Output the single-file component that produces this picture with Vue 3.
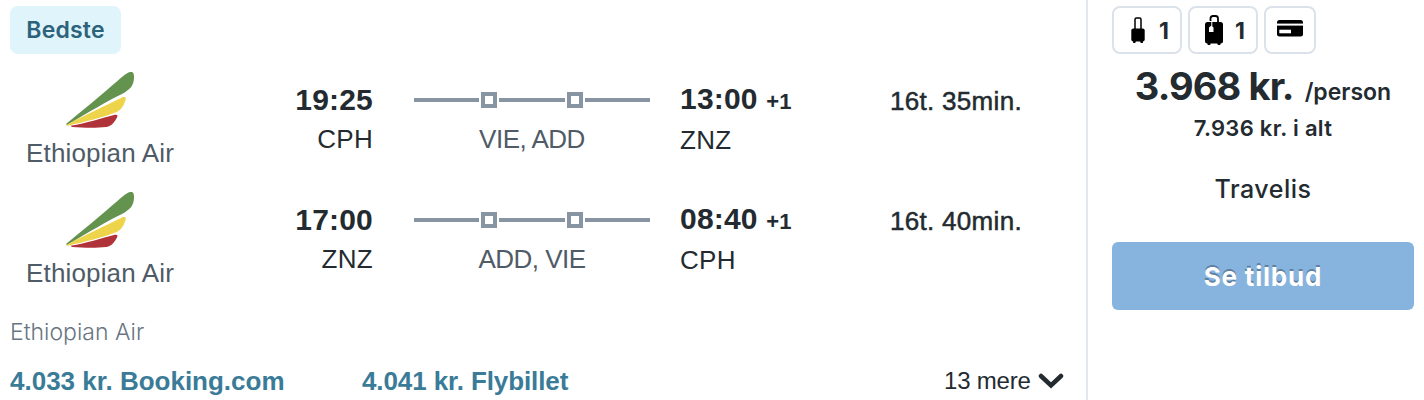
<template>
  <div class="result">
    <main class="details">
      <span class="badge">Bedste</span>
      <ul class="legs">
        <li class="leg" v-for="leg in legs" :key="leg.from">
          <div class="airline">
            <svg class="airline__logo" width="70" height="58" viewBox="0 0 70 58" fill="none" xmlns="http://www.w3.org/2000/svg">
              <path d="M1 52C18 38 35 24 50 11C56 6 61 1 65 0C68 -0.500 69 1 69 5C69 13 66 17 57 22C44 28 24 40 2 53Z" fill="#64924f"/>
              <path d="M1.500 53C22 42 40 34 55 26.500C60 24 61.500 25 60.500 28C58 36 55 39 49 41C39 45 19 50 4 53.500C2 54 1 53.800 1.500 53Z" fill="#edd44b"/>
              <path d="M5.500 53.800C22 51 36 46.500 48 43.300C52 42.300 53.500 43 52 45.500C49 51 46 54.500 41 55C31 56.200 18 55.700 7 55Z" fill="#b1333a"/>
            </svg>
            <span class="airline__name">Ethiopian Air</span>
          </div>
          <div class="depart">
            <span class="time">{{ leg.departure }}</span>
            <span class="airport">{{ leg.from }}</span>
          </div>
          <div class="stops">
            <div class="stops__line">
              <i class="dash"></i>
              <i class="stop"></i>
              <i class="dash"></i>
              <i class="stop"></i>
              <i class="dash"></i>
            </div>
            <span class="stops__names">{{ leg.stops }}</span>
          </div>
          <div class="arrive">
            <span class="time">{{ leg.arrival }} <small class="next-day">+1</small></span>
            <span class="airport">{{ leg.to }}</span>
          </div>
          <span class="duration">{{ leg.duration }}</span>
        </li>
      </ul>
      <p class="operator">Ethiopian Air</p>
      <div class="offers">
        <a class="offer offer_first">4.033 kr. Booking.com</a>
        <a class="offer offer_second">4.041 kr. Flybillet</a>
        <span class="more">13 mere</span>
        <svg class="chevron" width="26" height="16" viewBox="0 0 26 16" fill="none" xmlns="http://www.w3.org/2000/svg">
          <path d="M3 3L13 12.5L23 3" stroke="#232b30" stroke-width="4.5" stroke-linecap="round" stroke-linejoin="miter"/>
        </svg>
      </div>
    </main>
    <aside class="price">
      <div class="perks">
        <span class="perk perk_bag">
          <svg width="14" height="26" viewBox="0 0 14 26" fill="none" xmlns="http://www.w3.org/2000/svg">
            <path d="M4 12V2.5Q4 1 5.5 1H8.5Q10 1 10 2.5V12" stroke="#000" stroke-width="1.5"/>
            <rect x="0.3" y="11.5" width="13.4" height="13" rx="2" fill="#000"/>
            <rect x="2" y="23.5" width="2.6" height="2.5" rx="0.8" fill="#000"/>
            <rect x="9.4" y="23.5" width="2.6" height="2.5" rx="0.8" fill="#000"/>
          </svg>
          <b>1</b>
        </span>
        <span class="perk perk_case">
          <svg width="18" height="30" viewBox="0 0 18 30" fill="none" xmlns="http://www.w3.org/2000/svg">
            <path d="M5.5 6V3.5Q5.5 1 8 1H10.5Q13 1 13 3.5V7" stroke="#000" stroke-width="1.8"/>
            <rect y="7" width="18" height="21.5" rx="2.5" fill="#000"/>
            <rect x="2.5" y="27.5" width="3" height="2.5" rx="0.8" fill="#000"/>
            <rect x="12.5" y="27.5" width="3" height="2.5" rx="0.8" fill="#000"/>
            <path d="M4 17V12.5L6.3 10.5L8.5 12.5V17Z" fill="#fff"/>
            <path d="M6.8 6V11.5" stroke="#fff" stroke-width="1"/>
          </svg>
          <b>1</b>
        </span>
        <span class="perk perk_card">
          <svg width="26" height="17" viewBox="0 0 26 17" fill="none" xmlns="http://www.w3.org/2000/svg">
            <rect width="26" height="16.5" rx="2.5" fill="#000"/>
            <rect y="3.6" width="26" height="2" fill="#fff"/>
            <rect x="2.3" y="9.7" width="11.7" height="3.6" fill="#fff"/>
          </svg>
        </span>
      </div>
      <div class="amount">
        <strong>3.968 kr.</strong>
        <span class="per">/person</span>
      </div>
      <div class="total">7.936 kr. i alt</div>
      <div class="provider">Travelis</div>
      <button class="deal" type="button"><span>Se tilbud</span></button>
    </aside>
  </div>
</template>

<script setup>
const legs = [
  {
    departure: '19:25',
    from: 'CPH',
    stops: 'VIE, ADD',
    arrival: '13:00',
    to: 'ZNZ',
    duration: '16t. 35min.',
  },
  {
    departure: '17:00',
    from: 'ZNZ',
    stops: 'ADD, VIE',
    arrival: '08:40',
    to: 'CPH',
    duration: '16t. 40min.',
  },
];
</script>

<style>
body {
  background: #fff;
}
</style>

<style scoped>
.result {
  display: flex;
  box-sizing: border-box;
  width: 1424px;
  height: 400px;
  overflow: hidden;
  color: #232b30;
  font-family: "Liberation Sans", Arial, sans-serif;
  white-space: nowrap;
}

.details {
  box-sizing: border-box;
  width: 1088px;
  padding: 6px 0 0 10px;
  border-right: 2px solid #e3e8ee;
}

.badge {
  display: flex;
  align-items: center;
  justify-content: center;
  width: 111px;
  height: 48px;
  border-radius: 8px;
  background: #e0f4fc;
  color: #2c637b;
  font: 600 23px/48px Inter, sans-serif;
  letter-spacing: 0.2px;
}

.legs {
  margin: 0;
  padding: 18px 0 0;
  list-style: none;
}

.leg {
  display: grid;
  grid-template-columns: 180px 183px 41px 236px 30px 210px 1fr;
  height: 120px;
}

.airline {
  display: flex;
  flex-direction: column;
  align-items: center;
}

.airline__logo {
  display: block;
}

.airline__name {
  margin-top: 8px;
  color: #4f5b66;
  font-size: 26px;
  line-height: 30px;
  letter-spacing: 0.15px;
}

.depart,
.arrive {
  display: flex;
  flex-direction: column;
  padding-top: 11px;
}

.depart {
  align-items: flex-end;
}

.time {
  font-size: 30px;
  font-weight: 700;
  line-height: 34px;
  letter-spacing: 0.2px;
}

.next-day {
  font-size: 22px;
}

.airport {
  margin-top: 7px;
  font-size: 26px;
  line-height: 30px;
  letter-spacing: 0.3px;
}

.stops {
  grid-column: 4;
  display: flex;
  flex-direction: column;
  align-items: center;
  padding-top: 20px;
}

.stops__line {
  display: flex;
  align-items: center;
  gap: 2px;
  width: 100%;
}

.dash {
  flex: 1;
  height: 4px;
  background: #8795a3;
}

.stop {
  box-sizing: border-box;
  width: 16px;
  height: 16px;
  border: 4px solid #8795a3;
}

.stops__names {
  margin-top: 16px;
  color: #4f5b66;
  font-size: 26px;
  line-height: 30px;
  letter-spacing: -0.5px;
}

.arrive {
  grid-column: 6;
  padding-top: 10px;
}

.arrive .airport {
  margin-top: 6px;
}

.duration {
  padding-top: 14px;
  font-size: 26px;
  line-height: 30px;
  letter-spacing: 0.3px;
  -webkit-text-stroke: 0.5px #232b30;
}

.operator {
  margin: 6px 0 0;
  color: #697582;
  font: 300 23px/28px Inter, sans-serif;
}

.offers {
  display: flex;
  align-items: center;
  margin-top: 20px;
  height: 30px;
}

.offer {
  color: #3a7b98;
  font-size: 26px;
  font-weight: 700;
}

.offer_first {
  width: 352px;
}

.offer_second {
  width: 582px;
  letter-spacing: -0.1px;
}

.more {
  width: 94px;
  font-size: 24px;
  letter-spacing: -0.2px;
}

.price {
  box-sizing: border-box;
  width: 336px;
  padding: 6px 10px 0 24px;
  font-family: Inter, sans-serif;
  text-align: center;
}

.perks {
  display: flex;
  gap: 6px;
}

.perk {
  display: flex;
  align-items: center;
  box-sizing: border-box;
  width: 70px;
  height: 48px;
  border: 2px solid #dce2e9;
  border-radius: 8px;
  font-size: 23px;
}

.perk b {
  padding-top: 2px;
}

.perk_bag {
  gap: 14px;
  padding-left: 17px;
}

.perk_case {
  gap: 12px;
  padding-left: 15px;
}

.perk_card {
  width: 52px;
  padding: 0 0 3px 11px;
}

.amount {
  display: flex;
  align-items: baseline;
  justify-content: center;
  gap: 11px;
  margin-top: 8px;
  line-height: 48px;
}

.amount strong {
  font-size: 38px;
  font-weight: 700;
  letter-spacing: -0.9px;
}

.per {
  font-size: 23px;
  font-weight: 600;
}

.total {
  margin-top: -2px;
  font-size: 22px;
  font-weight: 600;
  line-height: 28px;
  letter-spacing: 0.3px;
}

.provider {
  margin-top: 31px;
  font-size: 25px;
  font-weight: 500;
  line-height: 32px;
  letter-spacing: 0.5px;
}

.deal {
  display: block;
  box-sizing: border-box;
  width: 302px;
  height: 68px;
  margin-top: 37px;
  padding: 2px 0 0;
  border: 0;
  border-radius: 6px;
  background: #86b4de;
  color: #fff;
  font: 700 26px/66px Inter, sans-serif;
  letter-spacing: 0.8px;
  text-shadow: 0 -2px 0 rgba(0, 0, 0, 0.3);
}
</style>
